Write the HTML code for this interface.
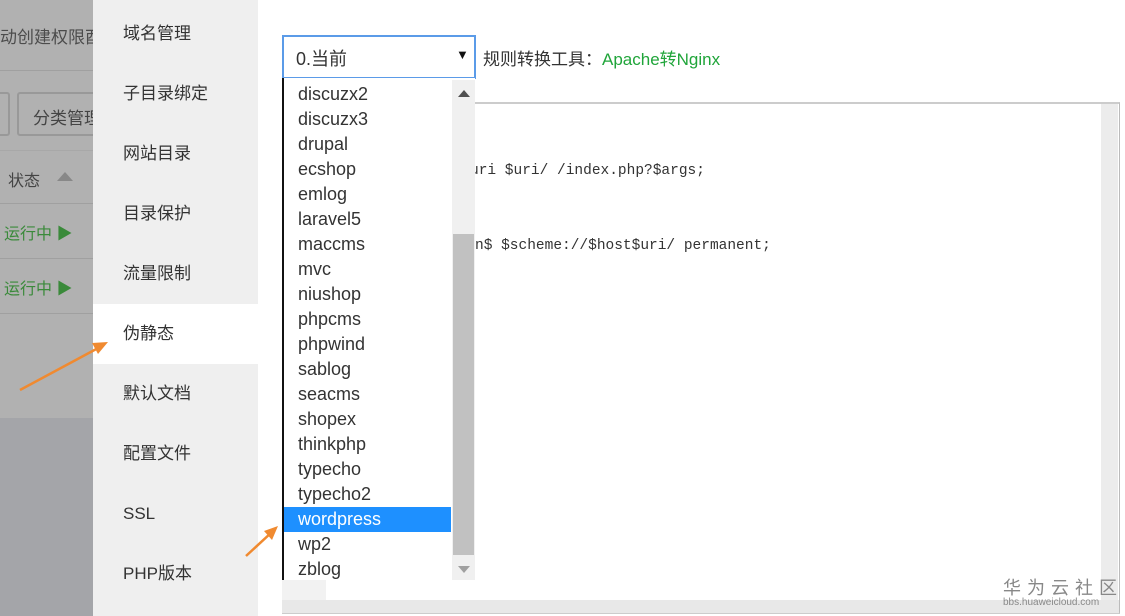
<!DOCTYPE html>
<html><head><meta charset="utf-8"><style>
*{margin:0;padding:0;box-sizing:border-box}
body{width:1125px;height:616px;overflow:hidden;position:relative;background:#fff;font-family:"Liberation Sans","Noto Sans CJK SC",sans-serif}
.abs{position:absolute}
.left{left:0;top:0;width:93px;height:616px;background:#a4a5a9}
.lt{left:0;top:0;width:93px;height:418px;background:#b1b1b1}
.side{left:93px;top:0;width:165px;height:616px;background:#efefef}
.si{position:absolute;left:123px;font-size:17px;color:#333;line-height:20px}
.dd{left:282px;top:78px;width:193px;height:502px;background:#fff;border-left:2px solid #111}
.it{position:absolute;left:298px;font-size:18px;color:#333;line-height:25px}
.mono{font-family:"Liberation Mono","Noto Sans CJK SC",monospace;font-size:14.5px;color:#333}
</style></head><body>
<div class="abs left"></div>
<div class="abs lt"></div>
<div class="abs" style="left:0;top:23px;font-size:17px;color:#333;opacity:.8">动创建权限酉</div>
<div class="abs" style="left:0;top:70px;width:93px;height:1px;background:#a0a0a0"></div>
<div class="abs" style="left:-5px;top:92px;width:15px;height:44px;border:2px solid #999;border-radius:3px"></div>
<div class="abs" style="left:17px;top:92px;width:90px;height:44px;border:2px solid #999;border-radius:3px"></div>
<div class="abs" style="left:33px;top:104px;font-size:17px;color:#444">分类管理</div>
<div class="abs" style="left:0;top:150px;width:93px;height:1px;background:#a8a8a8"></div>
<div class="abs" style="left:8px;top:167px;font-size:16px;color:#444">状态</div>
<div class="abs" style="left:57px;top:172px;width:0;height:0;border-left:8px solid transparent;border-right:8px solid transparent;border-bottom:9px solid #888"></div>
<div class="abs" style="left:0;top:203px;width:93px;height:1px;background:#a0a0a0"></div>
<div class="abs" style="left:4px;top:220px;font-size:16px;color:#3a8a3a">运行中 ▶</div>
<div class="abs" style="left:0;top:258px;width:93px;height:1px;background:#a0a0a0"></div>
<div class="abs" style="left:4px;top:275px;font-size:16px;color:#3a8a3a">运行中 ▶</div>
<div class="abs" style="left:0;top:313px;width:93px;height:1px;background:#a0a0a0"></div>
<div class="abs side"></div>
<div class="abs" style="left:93px;top:304px;width:165px;height:60px;background:#fff"></div>
<div class="si" style="top:24px">域名管理</div>
<div class="si" style="top:84px">子目录绑定</div>
<div class="si" style="top:144px">网站目录</div>
<div class="si" style="top:204px">目录保护</div>
<div class="si" style="top:264px">流量限制</div>
<div class="si" style="top:324px">伪静态</div>
<div class="si" style="top:384px">默认文档</div>
<div class="si" style="top:444px">配置文件</div>
<div class="si" style="top:504px">SSL</div>
<div class="si" style="top:564px">PHP版本</div>
<!-- editor -->
<div class="abs" style="left:282px;top:102px;width:838px;height:512px;border-top:2px solid #ccc;border-right:1px solid #bbb;border-bottom:2px solid #ccc;background:#fff"></div>
<div class="abs" style="left:282px;top:104px;width:44px;height:496px;background:#f2f2f2"></div>
<div class="abs" style="left:1101px;top:104px;width:17px;height:496px;background:#ececec"></div>
<div class="abs" style="left:282px;top:600px;width:837px;height:13px;background:#e8e8e8"></div>
<div class="abs mono" style="left:470px;top:163px">uri $uri/ /index.php?$args;</div>
<div class="abs mono" style="left:475px;top:238px">n$ $scheme://$host$uri/ permanent;</div>
<!-- select -->
<div class="abs" style="left:282px;top:35px;width:194px;height:44px;border:2px solid #5b9be8;background:#fff"></div>
<div class="abs" style="left:296px;top:45px;font-size:18px;color:#333">0.当前</div>
<div class="abs" style="left:456px;top:47px;font-size:13px;color:#111">▼</div>
<div class="abs" style="left:483px;top:45px;font-size:17px;color:#333">规则转换工具：<span style="color:#20a53a">Apache转Nginx</span></div>
<div class="abs dd"></div>
<div class="abs" style="left:452px;top:80px;width:23px;height:500px;background:#f0f0f0"></div>
<div class="abs" style="left:453px;top:234px;width:21px;height:321px;background:#c1c1c1"></div>
<div class="abs" style="left:458px;top:90px;width:0;height:0;border-left:6px solid transparent;border-right:6px solid transparent;border-bottom:7px solid #505050"></div>
<div class="abs" style="left:458px;top:566px;width:0;height:0;border-left:6px solid transparent;border-right:6px solid transparent;border-top:7px solid #a0a0a0"></div>
<div class="abs" style="left:284px;top:507px;width:167px;height:25px;background:#1e90ff"></div>
<div class="it" style="top:82px">discuzx2</div>
<div class="it" style="top:107px">discuzx3</div>
<div class="it" style="top:132px">drupal</div>
<div class="it" style="top:157px">ecshop</div>
<div class="it" style="top:182px">emlog</div>
<div class="it" style="top:207px">laravel5</div>
<div class="it" style="top:232px">maccms</div>
<div class="it" style="top:257px">mvc</div>
<div class="it" style="top:282px">niushop</div>
<div class="it" style="top:307px">phpcms</div>
<div class="it" style="top:332px">phpwind</div>
<div class="it" style="top:357px">sablog</div>
<div class="it" style="top:382px">seacms</div>
<div class="it" style="top:407px">shopex</div>
<div class="it" style="top:432px">thinkphp</div>
<div class="it" style="top:457px">typecho</div>
<div class="it" style="top:482px">typecho2</div>
<div class="it" style="top:507px;color:#fff">wordpress</div>
<div class="it" style="top:532px">wp2</div>
<div class="it" style="top:557px">zblog</div>
<!-- arrows -->
<svg class="abs" style="left:0;top:0" width="1125" height="616">
<line x1="20" y1="390" x2="100" y2="347" stroke="#f08a30" stroke-width="2.5"/>
<polygon points="108,342 92,343 98,354" fill="#f08a30"/>
<line x1="246" y1="556" x2="272" y2="532" stroke="#f08a30" stroke-width="2.5"/>
<polygon points="278,526 264,531 272,540" fill="#f08a30"/>
</svg>
<div class="abs" style="left:1003px;top:574px;font-size:18px;color:#888;letter-spacing:6px">华为云社区</div>
<div class="abs" style="left:1003px;top:597px;font-size:10px;color:#888">bbs.huaweicloud.com</div>
</body></html>
